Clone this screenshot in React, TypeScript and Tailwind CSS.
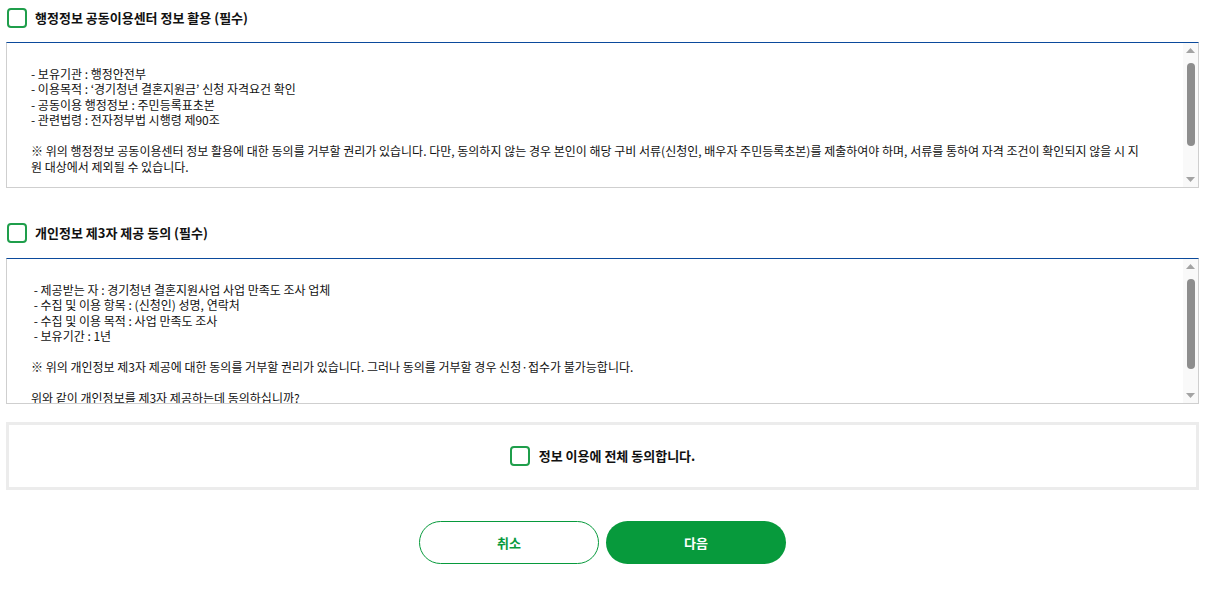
import { useState } from "react";

const FONT = { fontFamily: '"Noto Sans CJK KR", "Noto Sans", sans-serif' };

const adminText = `
- 보유기관 : 행정안전부
- 이용목적 : ‘경기청년 결혼지원금’ 신청 자격요건 확인
- 공동이용 행정정보 : 주민등록표초본
- 관련법령 : 전자정부법 시행령 제90조

※ 위의 행정정보 공동이용센터 정보 활용에 대한 동의를 거부할 권리가 있습니다. 다만, 동의하지 않는 경우 본인이 해당 구비 서류(신청인, 배우자 주민등록초본)를 제출하여야 하며, 서류를 통하여 자격 조건이 확인되지 않을 시 지원 대상에서 제외될 수 있습니다.
`;

const thirdPartyText = `
 - 제공받는 자 : 경기청년 결혼지원사업 사업 만족도 조사 업체
 - 수집 및 이용 항목 : (신청인) 성명, 연락처
 - 수집 및 이용 목적 : 사업 만족도 조사
 - 보유기간 : 1년

※ 위의 개인정보 제3자 제공에 대한 동의를 거부할 권리가 있습니다. 그러나 동의를 거부할 경우 신청·접수가 불가능합니다.

위와 같이 개인정보를 제3자 제공하는데 동의하십니까?
`;

function Check({ checked, onClick }: { checked: boolean; onClick: () => void }) {
  return (
    <button
      onClick={onClick}
      className={`w-5 h-5 rounded-[4px] border-2 border-[#1f9e4b] flex items-center justify-center shrink-0 ${
        checked ? "bg-[#079a3c]" : "bg-white"
      }`}
    >
      {checked && (
        <svg width="12" height="12" viewBox="0 0 12 12" fill="none">
          <path d="M2 6.2l2.6 2.6L10 3.4" stroke="#fff" strokeWidth="2" />
        </svg>
      )}
    </button>
  );
}

// classic scrollbar look: arrows + rounded gray thumb
function ScrollBar({ thumb }: { thumb: number }) {
  return (
    <div className="w-[15px] shrink-0 bg-[#f9f9f9] flex flex-col items-center">
      <div className="h-[15px] flex items-center justify-center">
        <svg width="9" height="5" viewBox="0 0 9 5">
          <path d="M4.5 0L9 5H0z" fill="#a3a3a3" />
        </svg>
      </div>
      <div className="flex-1 w-full pt-[5px] flex justify-center">
        <div className="w-[8px] rounded-full bg-[#8d8d8d]" style={{ height: thumb }} />
      </div>
      <div className="h-[15px] flex items-center justify-center">
        <svg width="9" height="5" viewBox="0 0 9 5">
          <path d="M0 0H9L4.5 5z" fill="#a3a3a3" />
        </svg>
      </div>
    </div>
  );
}

function TermBox({ text, thumb }: { text: string; thumb: number }) {
  return (
    <div className="flex h-[146px] border border-[#cfcfcf] border-t-[#0b4a9c] bg-white">
      <div className="flex-1 overflow-hidden pl-6 pr-[40px] pt-[7px] text-[12px] leading-[15.5px] text-[#111] whitespace-pre-wrap">
        {text}
      </div>
      <ScrollBar thumb={thumb} />
    </div>
  );
}

export default function App() {
  const [agree1, setAgree1] = useState(false);
  const [agree2, setAgree2] = useState(false);
  const all = agree1 && agree2;

  return (
    <div className="w-[1193px] ml-[6px] bg-white pb-8" style={FONT}>
      <div className="flex items-center gap-[8px] pt-[8px] pl-[1px]">
        <Check checked={agree1} onClick={() => setAgree1(!agree1)} />
        <span className="text-[13px] font-bold text-[#111]">
          행정정보 공동이용센터 정보 활용 (필수)
        </span>
      </div>
      <div className="mt-[14px]">
        <TermBox text={adminText} thumb={83} />
      </div>

      <div className="flex items-center gap-[8px] mt-[35px] pl-[1px]">
        <Check checked={agree2} onClick={() => setAgree2(!agree2)} />
        <span className="text-[13px] font-bold text-[#111]">
          개인정보 제3자 제공 동의 (필수)
        </span>
      </div>
      <div className="mt-[15px]">
        <TermBox text={thirdPartyText} thumb={90} />
      </div>

      <div className="mt-[18px] h-[68px] border-[3px] border-[#ececec] flex items-center justify-center gap-[9px]">
        <Check
          checked={all}
          onClick={() => {
            setAgree1(!all);
            setAgree2(!all);
          }}
        />
        <span className="text-[13px] font-bold text-[#111]">
          정보 이용에 전체 동의합니다.
        </span>
      </div>

      <div className="mt-[31px] flex justify-center gap-[7px]">
        <button className="w-[180px] h-[43px] rounded-full border border-[#079a3c] bg-white text-[#079a3c] text-[13px] font-bold">
          취소
        </button>
        <button className="w-[180px] h-[43px] rounded-full bg-[#079a3c] text-white text-[13px] font-bold">
          다음
        </button>
      </div>
    </div>
  );
}
